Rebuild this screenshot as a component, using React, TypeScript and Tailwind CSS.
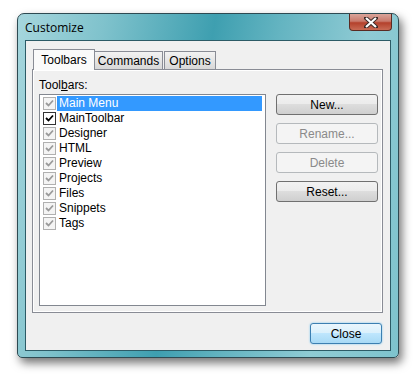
import React from 'react';

const items = [
  { name: 'Main Menu', active: false, selected: true },
  { name: 'MainToolbar', active: true },
  { name: 'Designer' },
  { name: 'HTML' },
  { name: 'Preview' },
  { name: 'Projects' },
  { name: 'Files' },
  { name: 'Snippets' },
  { name: 'Tags' },
];

function Check({ active }: { active?: boolean }) {
  const c = active ? '#000' : '#9a9a9a';
  return (
    <span
      className={`w-[13px] h-[13px] shrink-0 border flex items-center justify-center ${
        active ? 'border-[#333] bg-white' : 'border-[#b0b0b0] bg-[#f4f4f4]'
      }`}
    >
      <svg width="9" height="9" viewBox="0 0 9 9">
        <path d="M1 4 L3.5 6.5 L8 1.5" fill="none" stroke={c} strokeWidth="1.8" />
      </svg>
    </span>
  );
}

function Btn({ label, disabled }: { label: string; disabled?: boolean }) {
  return (
    <button
      className={`w-[102px] h-[21px] rounded-[3px] border text-[12px] ${
        disabled
          ? 'border-[#b5b9bc] bg-[#f4f4f4] text-[#8a8a8a]'
          : 'border-[#707070] bg-[linear-gradient(#f2f2f2_0%,#ebebeb_50%,#dddddd_50%,#cfcfcf_100%)] text-black'
      }`}
    >
      {label}
    </button>
  );
}

export default function App() {
  return (
    <div className="w-[417px] h-[380px] bg-white pl-[17px] pt-[13px] font-['Liberation_Sans',Arial,sans-serif]">
      <div className="w-[382px] h-[345px] rounded-t-[7px] rounded-b-[5px] border border-[#2d4a52] flex flex-col px-[7px] pb-[6px] shadow-[3px_5px_10px_rgba(0,0,0,0.55)] bg-[linear-gradient(100deg,#a6d6dd_0%,#7fc2cc_20%,#3e9fb0_45%,#64b4c1_60%,#8fcbd4_80%,#7ec3cd_100%)]">
        {/* Title bar */}
        <div className="h-[26px] flex items-start justify-between">
          <span className="mt-[7px] text-[12px] text-black font-['Open_Sans',sans-serif] leading-[14px]">
            Customize
          </span>
          <button className="-mr-[1px] w-[43px] h-[17px] rounded-b-[4px] border border-t-0 border-[#5a2a22] bg-[linear-gradient(#d9a49a_0%,#c97a6c_45%,#b4412c_55%,#c86b55_100%)] flex items-center justify-center">
            <svg width="14" height="11" viewBox="0 0 14 11">
              <path
                d="M2 1 L12 10 M12 1 L2 10"
                stroke="#3a2a28"
                strokeWidth="4"
                strokeLinecap="square"
              />
              <path d="M2 1 L12 10 M12 1 L2 10" stroke="#fff" strokeWidth="2.2" />
            </svg>
          </button>
        </div>

        {/* Client area */}
        <div className="flex-1 bg-[#f0f0f0] border border-[#2c5b66] flex flex-col pl-[6px] pr-[7px] pt-[8px]">
          {/* Tabs */}
          <div className="flex items-end h-[21px] pl-[1px] relative z-10 text-[12px]">
            <div className="h-[21px] w-[62px] bg-[#fafafa] border border-b-0 border-[#898c95] flex items-center justify-center pb-[1px]">
              Toolbars
            </div>
            <div className="h-[19px] w-[68px] border border-l-0 border-[#898c95] bg-[linear-gradient(#f2f2f2,#d8d8d8)] flex items-center justify-center">
              Commands
            </div>
            <div className="h-[19px] ml-[1px] w-[52px] border border-[#898c95] bg-[linear-gradient(#f2f2f2,#d8d8d8)] flex items-center justify-center">
              Options
            </div>
          </div>
          {/* Panel */}
          <div className="-mt-[1px] h-[244px] border border-[#898c95]">
            <div className="h-full border border-white bg-[#f0f0f0] flex pl-[5px] pt-[8px]">
              <div className="flex flex-col">
                <span className="text-[12px] leading-[13px] h-[14px]">
                  Tool<u>b</u>ars:
                </span>
                <div className="mt-[1px] w-[227px] h-[212px] border border-[#828790] bg-white pt-[1px] px-[3px]">
                  {items.map((it) => (
                    <div key={it.name} className="h-[15px] flex items-center">
                      <Check active={it.active} />
                      <span
                        className={`ml-[1px] h-[15px] flex-1 pl-[2px] text-[12px] leading-[15px] ${
                          it.selected ? 'bg-[#3399ff] text-white' : 'text-black'
                        }`}
                      >
                        {it.name}
                      </span>
                    </div>
                  ))}
                </div>
              </div>
              <div className="ml-[10px] mt-[15px] flex flex-col gap-[8px]">
                <Btn label="New..." />
                <Btn label="Rename..." disabled />
                <Btn label="Delete" disabled />
                <Btn label="Reset..." />
              </div>
            </div>
          </div>
          <div className="flex justify-end mt-[10px] pr-[1px]">
            <button className="w-[72px] h-[21px] rounded-[3px] border border-[#3c7fb1] shadow-[0_0_2px_#6cc0f0] bg-[linear-gradient(#eaf6fd_0%,#d9f0fc_50%,#bee6fd_50%,#a7d9f5_100%)] text-[12px]">
              Close
            </button>
          </div>
        </div>
      </div>
    </div>
  );
}
